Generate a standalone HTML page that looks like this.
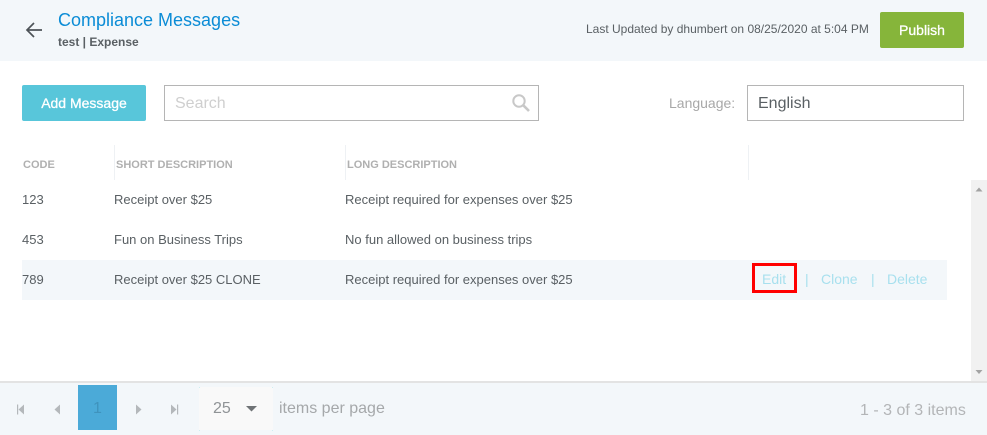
<!DOCTYPE html>
<html>
<head>
<meta charset="utf-8">
<style>
html,body{margin:0;padding:0;background:#fff}
body{width:987px;height:435px;position:relative;overflow:hidden;font-family:"Liberation Sans",sans-serif;color:#555b60}
.a{position:absolute;white-space:nowrap}
.t{font-size:13px;line-height:16px;color:#5a6064}
.h{font-size:11px;line-height:14px;font-weight:bold;color:#b0b0b0;top:158px}
.sep{position:absolute;top:145px;width:1px;height:35px;background:#eef1f4}
.l{font-size:14px;line-height:16px;color:#a8e0ee;top:271px}
.b{color:#fff;font-size:14px;text-align:center;border-radius:2px;-webkit-text-stroke:.3px #fff}
.d{position:absolute;width:1px;height:1px;background:#cdeef2}
</style>
</head>
<body>
<div class="a" style="left:0;top:0;width:987px;height:61px;background:#f3f7fa"></div>
<svg class="a" style="left:25px;top:21px" width="18" height="18" viewBox="0 0 18 18"><path d="M17 9H2M9 2L2 9l7 7" fill="none" stroke="#4d5358" stroke-width="1.7"/></svg>
<div class="a" style="left:58px;top:9px;font-size:18px;line-height:22px;color:#0b8cd6">Compliance Messages</div>
<div class="a" style="left:58px;top:35px;font-size:12px;line-height:14px;font-weight:bold;color:#5a6064">test | Expense</div>
<div class="a" style="left:586px;top:22px;font-size:12px;line-height:15px;color:#5a6064">Last Updated by dhumbert on 08/25/2020 at 5:04 PM</div>
<div class="a b" style="left:880px;top:12px;width:84px;height:36px;background:#86b53a;line-height:36px">Publish</div>

<div class="a b" style="left:22px;top:85px;width:124px;height:36px;background:#58c6da;line-height:37px">Add Message</div>
<div class="a" style="left:164px;top:85px;width:373px;height:34px;border:1px solid #b5b5b5"></div>
<div class="a" style="left:175px;top:94px;font-size:16px;line-height:19px;color:#cfcfcf">Search</div>
<svg class="a" style="left:511px;top:93px" width="20" height="20" viewBox="0 0 20 20"><circle cx="8" cy="8" r="5.7" fill="none" stroke="#c8c8c8" stroke-width="2"/><path d="M12.3 12.3L18 18" stroke="#c8c8c8" stroke-width="2.6" fill="none"/></svg>
<div class="a" style="left:669px;top:95px;font-size:14px;line-height:16px;color:#a8a8a8">Language:</div>
<div class="a" style="left:747px;top:85px;width:215px;height:34px;border:1px solid #b5b5b5"></div>
<div class="a" style="left:758px;top:94px;font-size:16px;line-height:19px;color:#5a6064">English</div>

<div class="sep" style="left:114px"></div>
<div class="sep" style="left:345px"></div>
<div class="sep" style="left:748px"></div>
<div class="a h" style="left:23px">CODE</div>
<div class="a h" style="left:116px">SHORT DESCRIPTION</div>
<div class="a h" style="left:347px">LONG DESCRIPTION</div>

<div class="a" style="left:22px;top:260px;width:925px;height:40px;background:#f3f7fa"></div>
<div class="a t" style="left:22px;top:192px">123</div>
<div class="a t" style="left:114px;top:192px">Receipt over $25</div>
<div class="a t" style="left:345px;top:192px">Receipt required for expenses over $25</div>
<div class="a t" style="left:22px;top:232px">453</div>
<div class="a t" style="left:114px;top:232px">Fun on Business Trips</div>
<div class="a t" style="left:345px;top:232px">No fun allowed on business trips</div>
<div class="a t" style="left:22px;top:272px">789</div>
<div class="a t" style="left:114px;top:272px">Receipt over $25 CLONE</div>
<div class="a t" style="left:345px;top:272px">Receipt required for expenses over $25</div>
<div class="a l" style="left:762px">Edit</div>
<div class="a l" style="left:805px">|</div>
<div class="a l" style="left:821px">Clone</div>
<div class="a l" style="left:871px">|</div>
<div class="a l" style="left:887px">Delete</div>
<div class="a" style="left:752px;top:263px;width:39px;height:24px;border:3px solid #f00"></div>

<div class="a" style="left:971px;top:180px;width:16px;height:201px;background:#f1f1f1"></div>
<svg class="a" style="left:971px;top:185px" width="16" height="8"><path d="M4.500 6.500L8 2.500l3.500 4z" fill="#a3a3a3"/></svg>
<svg class="a" style="left:971px;top:368px" width="16" height="8"><path d="M4.500 2H11.500L8 6z" fill="#a3a3a3"/></svg>

<div class="a" style="left:0;top:381px;width:987px;height:54px;background:#f3f7fa"></div>
<div class="a" style="left:0;top:381px;width:987px;height:2px;background:#e3e3e3"></div>
<svg class="a" style="left:14px;top:402px" width="170" height="16" viewBox="0 0 170 16" fill="#b4b8bb"><path d="M3 2.500h1.200v10H3zM10 2.500v10L4.500 7.500z"/><path d="M46 2.500v10L40.500 7.500z"/><path d="M122 2.500v10l5.500-5z"/><path d="M157 2.500v10l5.500-5zM163 2.500h1.200v10H163z"/></svg>
<div class="a" style="left:78px;top:385px;width:39px;height:45px;background:#4baad8;color:#3f93bd;font-size:16px;line-height:48px;text-align:center">1</div>
<div class="a" style="left:199px;top:387px;width:74px;height:43px;background:#f9f9f9"></div>
<div class="d" style="left:199px;top:387px"></div><div class="d" style="left:272px;top:387px"></div><div class="d" style="left:199px;top:430px"></div><div class="d" style="left:272px;top:430px"></div>
<div class="a" style="left:213px;top:399px;font-size:16px;line-height:19px;color:#8f9396">25</div>
<svg class="a" style="left:245px;top:405px" width="14" height="8"><path d="M1 1h11L6.500 6.500z" fill="#6f7376"/></svg>
<div class="a" style="left:279px;top:399px;font-size:16px;line-height:19px;color:#a5a8aa">items per page</div>
<div class="a" style="left:860px;top:401px;font-size:16px;line-height:19px;color:#b3b5b7">1 - 3 of 3 items</div>
</body>
</html>
